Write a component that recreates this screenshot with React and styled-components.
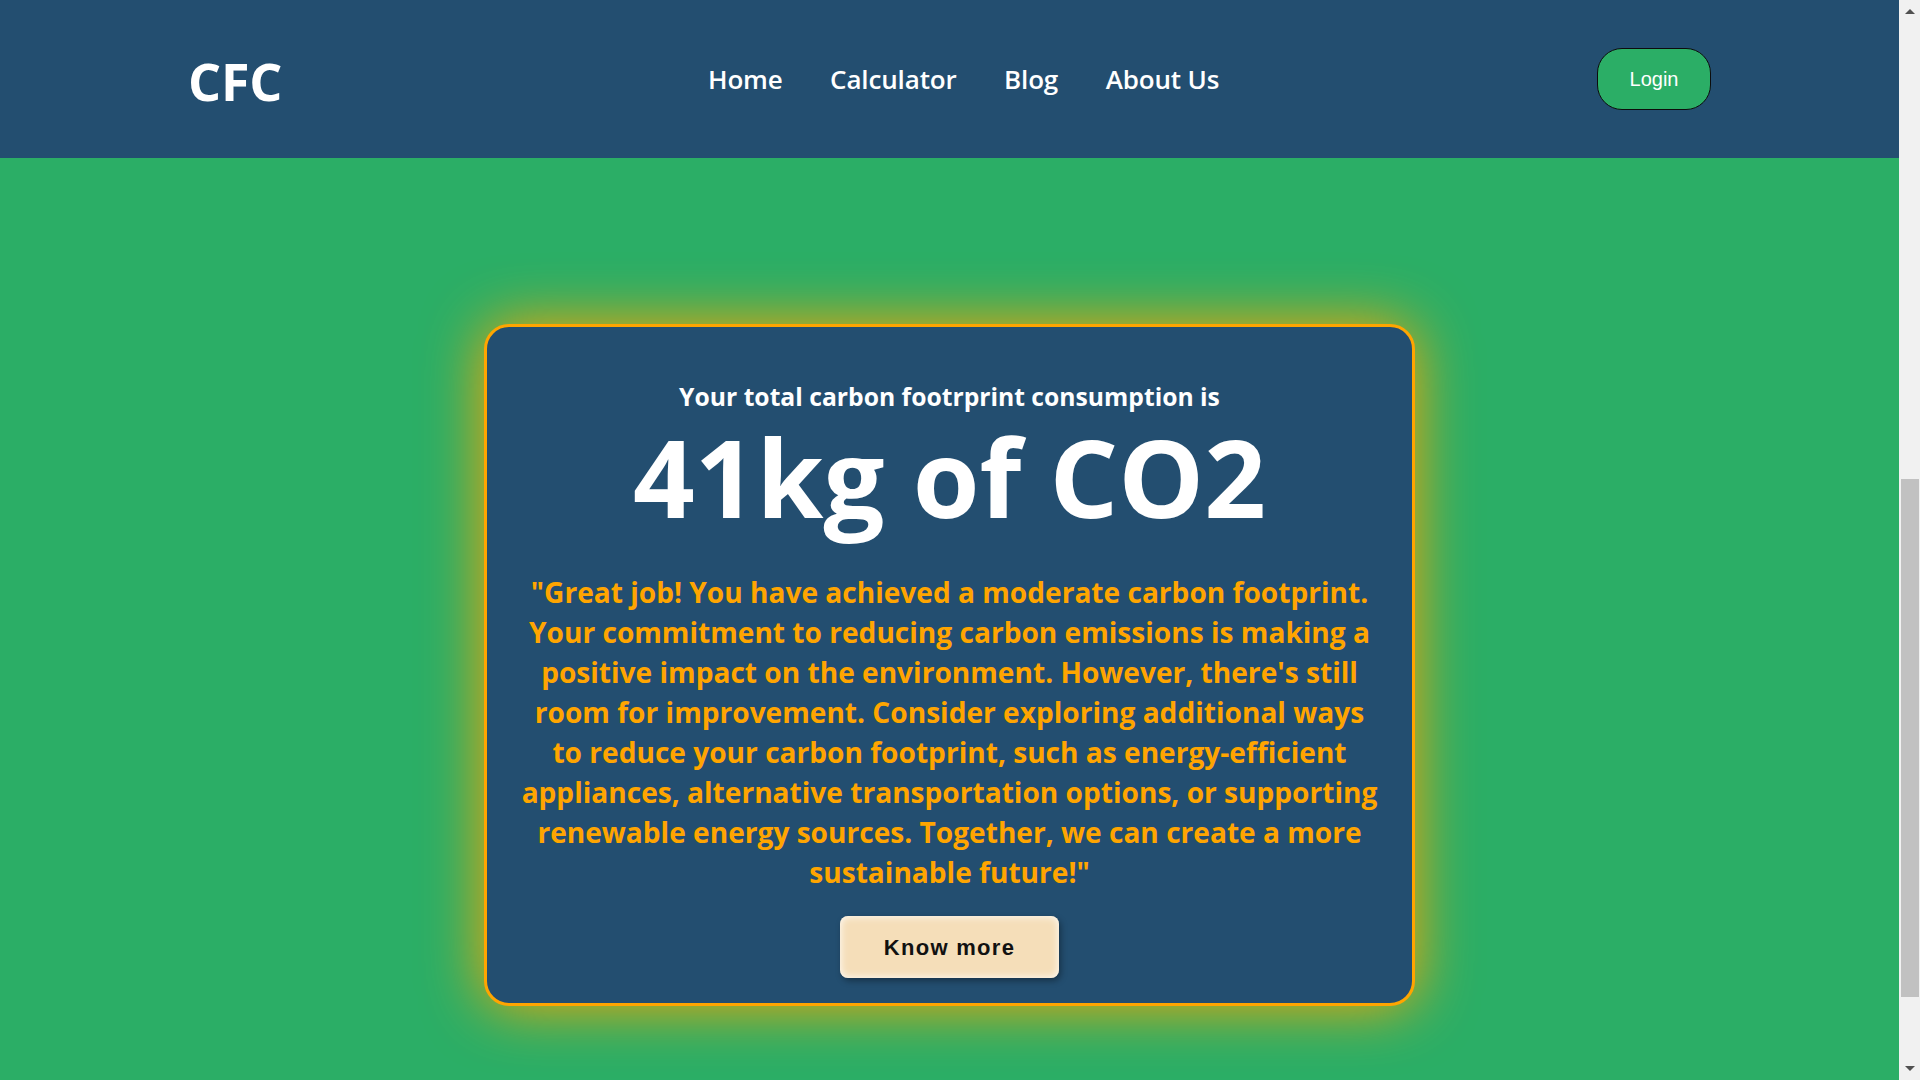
import React from 'react'
import styled, { createGlobalStyle } from 'styled-components'

const GlobalStyle = createGlobalStyle`
  html, body {
    margin: 0;
    padding: 0;
    height: 100%;
    overflow: hidden;
  }
  * { box-sizing: border-box; }
`

const links = ['Home', 'Calculator', 'Blog', 'About Us']

const message = `"Great job! You have achieved a moderate carbon footprint. Your commitment to reducing carbon emissions is making a positive impact on the environment. However, there's still room for improvement. Consider exploring additional ways to reduce your carbon footprint, such as energy-efficient appliances, alternative transportation options, or supporting renewable energy sources. Together, we can create a more sustainable future!"`

function App() {
  return (
    <Screen>
      <GlobalStyle />
      <Page>
        <Header>
          <Logo>CFC</Logo>
          <Nav>
            {links.map(link => (
              <NavLink key={link}>{link}</NavLink>
            ))}
          </Nav>
          <LoginButton>Login</LoginButton>
        </Header>
        <Main>
          <ResultCard>
            <Intro>Your total carbon footrprint consumption is</Intro>
            <Total>41kg of CO2</Total>
            <Message>{message}</Message>
            <KnowMore>Know more</KnowMore>
          </ResultCard>
        </Main>
      </Page>
      <ScrollRail>
        <ArrowUp />
        <ThumbArea>
          <Thumb />
        </ThumbArea>
        <ArrowDown />
      </ScrollRail>
    </Screen>
  )
}

export default App

const Screen = styled.div`
  display: flex;
  width: 100%;
  height: 1080px;
  font-family: "Open Sans", "Noto Sans", sans-serif;
`
const Page = styled.div`
  flex: 1;
  display: flex;
  flex-direction: column;
  background: #2bae66;
`
const Header = styled.header`
  height: 158px;
  flex-shrink: 0;
  display: flex;
  align-items: center;
  padding: 0 188px;
  background: #234e70;
  color: #fff;
`
const Logo = styled.div`
  width: 91px;
  padding-top: 3px;
  font-size: 52px;
  font-weight: 700;
  letter-spacing: -0.2px;
`
const Nav = styled.nav`
  display: flex;
  gap: 47.5px;
  margin-left: 429px;
`
const NavLink = styled.a`
  font-size: 26px;
  font-weight: 600;
  letter-spacing: -0.15px;
`
const LoginButton = styled.button`
  margin-left: auto;
  margin-top: -1px;
  width: 114px;
  height: 62px;
  padding-top: 2px;
  border: 1.5px solid #0c0c0c;
  border-radius: 25px;
  background: #2bae66;
  color: #fff;
  font-family: "Liberation Sans", Arial, sans-serif;
  font-size: 20px;
`
const Main = styled.main`
  flex: 1;
  padding-top: 166px;
`
const ResultCard = styled.section`
  width: 931px;
  height: 682px;
  margin: 0 auto;
  padding: 52px 30px 0;
  display: flex;
  flex-direction: column;
  align-items: center;
  text-align: center;
  background: #234e70;
  border: 3px solid orange;
  border-radius: 25px;
  box-shadow: 0 0 60px orange;
`
const Intro = styled.p`
  margin: 0;
  padding-top: 1px;
  font-size: 24.7px;
  font-weight: 700;
  color: #fff;
`
const Total = styled.h1`
  margin: -1px 0 0;
  font-size: 108px;
  font-weight: 700;
  color: #fff;
  line-height: 130px;
`
const Message = styled.p`
  max-width: 864px;
  margin: 30px 0 0;
  font-size: 28.1px;
  font-weight: 700;
  line-height: 40px;
  color: orange;
`
const KnowMore = styled.button`
  width: 219px;
  height: 62px;
  flex-shrink: 0;
  margin-top: 24px;
  padding-top: 2px;
  border: none;
  border-radius: 8px;
  background: #f5deb9;
  box-shadow: inset 0 0 8px #fff, 2px 3px 6px rgba(0, 0, 0, 0.35);
  color: #111;
  font-family: "Liberation Sans", Arial, sans-serif;
  font-size: 22px;
  font-weight: 700;
  letter-spacing: 1.3px;
`
const ScrollRail = styled.div`
  width: 21px;
  display: flex;
  flex-direction: column;
  align-items: center;
  background: #f1f1f1;
`
const ArrowUp = styled.div`
  width: 0;
  height: 0;
  margin-top: 9px;
  border-left: 5px solid transparent;
  border-right: 5px solid transparent;
  border-bottom: 5px solid #505050;
`
const ArrowDown = styled.div`
  width: 0;
  height: 0;
  margin-bottom: 9px;
  border-left: 5px solid transparent;
  border-right: 5px solid transparent;
  border-top: 5px solid #505050;
`
const ThumbArea = styled.div`
  flex: 1;
  width: 100%;
  padding: 465px 1px 0 2px;
`
const Thumb = styled.div`
  height: 518px;
  background: #c1c1c1;
`
